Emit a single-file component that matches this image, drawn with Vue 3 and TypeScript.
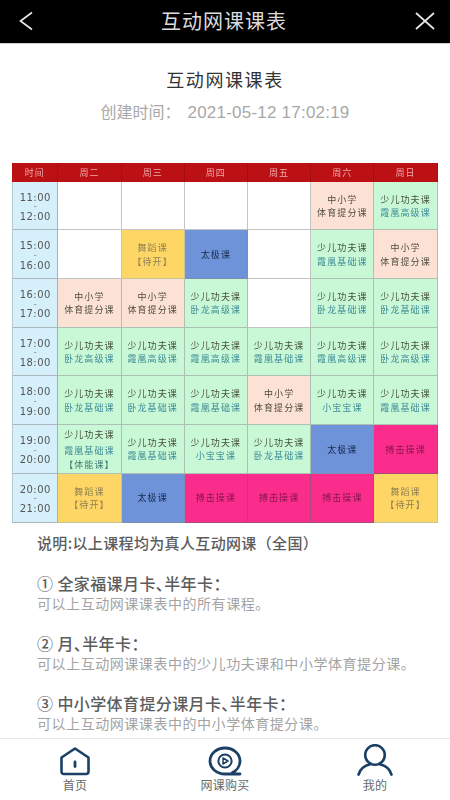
<script setup lang="ts">
type Kind = 'e' | 'g' | 'p' | 'y' | 'b' | 'k'
interface Cell { k: Kind; a?: string; b?: string; c?: string }

const heads = ['时间', '周二', '周三', '周四', '周五', '周六', '周日']
const e: Cell = { k: 'e' }
const zx: Cell = { k: 'p', a: '中小学', b: '体育提分课' }
const wd: Cell = { k: 'y', a: '舞蹈课', b: '【待开】' }
const tj: Cell = { k: 'b', a: '太极课' }
const bj: Cell = { k: 'k', a: '搏击操课' }
const g = (b: string, c?: string): Cell => ({ k: 'g', a: '少儿功夫课', b, c })
const xg = g('霞凰高级课')
const xj = g('霞凰基础课')
const wg = g('卧龙高级课')
const wj = g('卧龙基础课')
const xb = g('小宝宝课')

const rows: { s: string; t: string; cells: Cell[] }[] = [
  { s: '11:00', t: '12:00', cells: [e, e, e, e, zx, xg] },
  { s: '15:00', t: '16:00', cells: [e, wd, tj, e, xj, zx] },
  { s: '16:00', t: '17:00', cells: [zx, zx, wg, e, wj, wj] },
  { s: '17:00', t: '18:00', cells: [wg, xg, xg, xj, xg, wg] },
  { s: '18:00', t: '19:00', cells: [wj, wj, xj, zx, xb, xj] },
  { s: '19:00', t: '20:00', cells: [g('霞凰基础课', '【体能课】'), xj, xb, wj, tj, bj] },
  { s: '20:00', t: '21:00', cells: [wd, tj, bj, bj, bj, wd] },
]

const notes = [
  { h: '① 全家福课月卡、半年卡\uFF1A', d: '可以上互动网课课表中的所有课程。' },
  { h: '② 月、半年卡\uFF1A', d: '可以上互动网课课表中的少儿功夫课和中小学体育提分课。' },
  { h: '③ 中小学体育提分课月卡、半年卡\uFF1A', d: '可以上互动网课课表中的中小学体育提分课。' },
]
const lead = '说明:以上课程均为真人互动网课\uFF08全国\uFF09'
const dateLabel = '创建时间\uFF1A'
</script>

<template>
  <div class="page">
    <header class="bar">
      <svg class="back" width="16" height="20" viewBox="0 0 16 20" fill="none">
        <path d="M14 1.5 L2.5 10 L14 18.5" stroke="#e6e6e6" stroke-width="1.7" />
      </svg>
      <span class="bar-title">互动网课课表</span>
      <svg class="close" width="22" height="20" viewBox="0 0 22 20" fill="none">
        <path d="M2 2 L20 18 M20 2 L2 18" stroke="#e6e6e6" stroke-width="1.7" />
      </svg>
    </header>

    <main class="main">
      <h1 class="title">互动网课课表</h1>
      <p class="date">{{ dateLabel }}<span class="stamp">2021-05-12 17:02:19</span></p>

      <section class="table">
        <div v-for="h in heads" :key="h" class="head">{{ h }}</div>
        <template v-for="r in rows" :key="r.s">
          <div class="time">
            <span>{{ r.s }}</span>
            <span class="dash">-</span>
            <span>{{ r.t }}</span>
          </div>
          <div v-for="(c, i) in r.cells" :key="i" class="cell" :class="c.k">
            <span v-if="c.a" class="l1" :class="{ spaced: c.c }">{{ c.a }}</span>
            <span v-if="c.b" class="l2">{{ c.b }}</span>
            <span v-if="c.c" class="l3">{{ c.c }}</span>
          </div>
        </template>
      </section>

      <section class="notes">
        <p class="lead">{{ lead }}</p>
        <div v-for="n in notes" :key="n.h" class="note">
          <p class="note-h">{{ n.h }}</p>
          <p class="note-d">{{ n.d }}</p>
        </div>
      </section>
    </main>

    <nav class="tabs">
      <div class="tab">
        <svg width="32" height="30" viewBox="0 0 32 30" fill="none">
          <path d="M2.5 11.5 L16 2.5 L29.5 11.5 V25.5 Q29.5 28 27 28 H5 Q2.5 28 2.5 25.5 Z" stroke="#1c3f66" stroke-width="2.6" stroke-linejoin="round" />
          <path d="M16 16 V20.5" stroke="#1c3f66" stroke-width="2.8" stroke-linecap="round" />
        </svg>
        <span>首页</span>
      </div>
      <div class="tab">
        <svg width="34" height="30" viewBox="0 0 34 30" fill="none">
          <path d="M32 28 H17 C8.7 28 2 22.2 2 15 C2 7.8 8.7 2 17 2 C25.3 2 32 7.8 32 15 C32 19.8 29 24.5 24.5 26.5" stroke="#1c3f66" stroke-width="2.8" stroke-linecap="round" />
          <circle cx="17" cy="15" r="6.6" stroke="#1c3f66" stroke-width="2" />
          <path d="M15 12 L20 15 L15 18 Z" stroke="#1c3f66" stroke-width="1.5" stroke-linejoin="round" />
        </svg>
        <span>网课购买</span>
      </div>
      <div class="tab">
        <svg width="36" height="32" viewBox="0 0 36 32" fill="none">
          <circle cx="18" cy="11" r="9.8" stroke="#1c3f66" stroke-width="2.6" />
          <path d="M1.6 30.5 C3 25 8 21.5 12.5 20.5 M34.4 30.5 C33 25 28 21.5 23.5 20.5" stroke="#1c3f66" stroke-width="2.8" stroke-linecap="round" />
        </svg>
        <span>我的</span>
      </div>
    </nav>
  </div>
</template>

<style>
html, body { margin: 0; background: #fff; }
</style>

<style scoped>
.page {
  width: 450px;
  height: 800px;
  display: flex;
  flex-direction: column;
  overflow: hidden;
  background: #fff;
  font-family: "Noto Sans CJK SC", "Liberation Sans", sans-serif;
}
.bar {
  height: 44px;
  box-sizing: border-box;
  flex: none;
  background: #000;
  border-bottom: 1px solid #cfcfcf;
  display: flex;
  align-items: center;
  justify-content: space-between;
  padding: 0 14px 1px 18px;
  color: #dcdcdc;
}
.bar-title { font-size: 20px; letter-spacing: 1px; line-height: 1; }
.back, .close { flex: none; }
.main {
  flex: 1;
  min-height: 0;
  overflow: hidden;
  padding-top: 24px;
}
.title {
  margin: 0;
  text-align: center;
  font-size: 18px;
  letter-spacing: 1.6px;
  font-weight: 400;
  line-height: 22px;
  color: #333;
}
.date {
  margin: 10px 0 0;
  text-align: center;
  font-size: 16px;
  line-height: 22px;
  color: #a8a8a8;
}
.stamp {
  font-family: "Liberation Sans", sans-serif;
  font-size: 17px;
  letter-spacing: .22px;
  margin-left: 7px;
}
.table {
  margin: 39px 0 0 12.3px;
  width: 425.4px;
  display: grid;
  grid-template-columns: 46px repeat(6, 1fr);
  grid-template-rows: 18.7px repeat(7, 48.7px);
  background: #b8c8c0;
  filter: blur(.3px);
}
.head {
  background: #bb1014;
  color: #f0a9a9;
  font-size: 9px;
  letter-spacing: 1px;
  display: flex;
  align-items: center;
  justify-content: center;
  padding-top: 1px;
  box-sizing: border-box;
  border-right: 1px solid #a50d12;
}
.time {
  background: #d6f0fb;
  border-right: 1px solid #9fb4b8;
  border-bottom: 1px solid #a8b8bc;
  border-left: 1px solid #b5cbd2;
  box-sizing: border-box;
  padding-top: 3px;
  display: flex;
  flex-direction: column;
  align-items: center;
  justify-content: center;
  font-family: "DejaVu Sans", sans-serif;
  font-size: 10px;
  line-height: 9.6px;
  letter-spacing: .5px;
  color: #555;
}
.time span { display: block; }
.dash { font-size: 9px; color: #888; }
.cell {
  box-sizing: border-box;
  padding-top: 1px;
  display: flex;
  flex-direction: column;
  align-items: center;
  justify-content: center;
  border-right: 1px solid #adc0b4;
  border-bottom: 1px solid #adc0b4;
  font-size: 9px;
  line-height: 13.5px;
  letter-spacing: 1.1px;
  white-space: nowrap;
  text-align: center;
}
.cell.e { background: #fff; border-color: #c4c4c4; }
.cell.g { background: #c9f8d6; color: #4a4f45; }
.cell.g .l2 { color: #3e8a96; }
.cell.g .l3 { color: #3e7a70; }
.cell.g .l1 { color: #45503f; }
.cell.g .l1.spaced { margin-bottom: 3px; }
.cell.p { background: #fce2d4; color: #4f4a40; }
.cell.y { background: #fed665; color: #8f8055; border-color: #c9c49a; }
.cell.b { background: #6f93d9; color: #16294a; border-color: #7d8fb0; }
.cell.k { background: #fa2d8d; color: #86164c; border-color: #a84a78; }
.notes {
  margin-top: 10px;
  padding-left: 37px;
}
.lead {
  margin: 0;
  font-size: 15px;
  line-height: 20px;
  color: #5c5c5c;
  font-weight: 500;
  letter-spacing: .35px;
}
.note { margin-top: 20px; }
.note-h {
  margin: 0;
  font-size: 16px;
  line-height: 20px;
  letter-spacing: .4px;
  color: #5c5c5c;
  font-weight: 500;
  font-feature-settings: "palt";
}
.note-d {
  margin: 0;
  font-size: 14px;
  line-height: 20px;
  letter-spacing: .55px;
  color: #a3a3a3;
  white-space: nowrap;
}
.tabs {
  height: 62px;
  flex: none;
  box-sizing: border-box;
  border-top: 1px solid #e6e6e6;
  background: #fff;
  display: grid;
  grid-template-columns: repeat(3, 1fr);
}
.tab {
  display: flex;
  flex-direction: column;
  align-items: center;
  justify-content: flex-end;
  padding-bottom: 7px;
  font-size: 12px;
  line-height: 16px;
  letter-spacing: .3px;
  color: #696969;
}
.tab svg { display: block; margin-bottom: 1px; }
</style>
